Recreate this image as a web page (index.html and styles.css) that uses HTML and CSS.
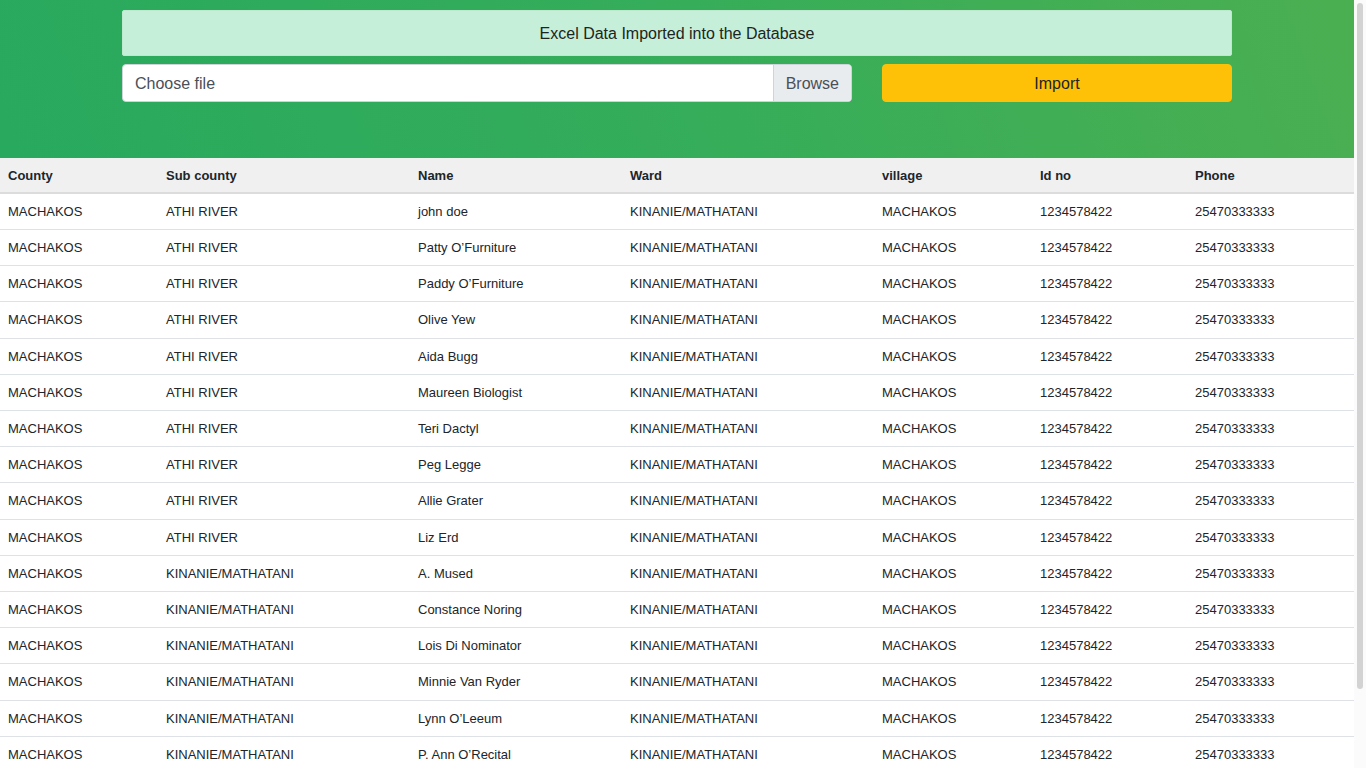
FILE: index.html
```html
<!DOCTYPE html>
<html lang="en">
<head>
<meta charset="utf-8">
<title>Excel Import</title>
<link rel="stylesheet" href="styles.css">
</head>
<body>
<div class="page">
<header class="hero">
  <div class="container">
    <div class="alert">Excel Data Imported into the Database</div>
    <form class="upload-row">
      <div class="file-col">
        <div class="file-input">
          <span class="file-label">Choose file</span>
          <span class="file-browse">Browse</span>
        </div>
      </div>
      <div class="btn-col">
        <button type="button" class="btn-import">Import</button>
      </div>
    </form>
  </div>
</header>
<table class="data-table">
  <colgroup>
    <col class="c1"><col class="c2"><col class="c3"><col class="c4"><col class="c5"><col class="c6"><col class="c7">
  </colgroup>
  <thead>
    <tr><th>County</th><th>Sub county</th><th>Name</th><th>Ward</th><th>village</th><th>Id no</th><th>Phone</th></tr>
  </thead>
  <tbody>
    <tr><td>MACHAKOS</td><td>ATHI RIVER</td><td>john doe</td><td>KINANIE/MATHATANI</td><td>MACHAKOS</td><td>1234578422</td><td>25470333333</td></tr>
    <tr><td>MACHAKOS</td><td>ATHI RIVER</td><td>Patty O’Furniture</td><td>KINANIE/MATHATANI</td><td>MACHAKOS</td><td>1234578422</td><td>25470333333</td></tr>
    <tr><td>MACHAKOS</td><td>ATHI RIVER</td><td>Paddy O’Furniture</td><td>KINANIE/MATHATANI</td><td>MACHAKOS</td><td>1234578422</td><td>25470333333</td></tr>
    <tr><td>MACHAKOS</td><td>ATHI RIVER</td><td>Olive Yew</td><td>KINANIE/MATHATANI</td><td>MACHAKOS</td><td>1234578422</td><td>25470333333</td></tr>
    <tr><td>MACHAKOS</td><td>ATHI RIVER</td><td>Aida Bugg</td><td>KINANIE/MATHATANI</td><td>MACHAKOS</td><td>1234578422</td><td>25470333333</td></tr>
    <tr><td>MACHAKOS</td><td>ATHI RIVER</td><td>Maureen Biologist</td><td>KINANIE/MATHATANI</td><td>MACHAKOS</td><td>1234578422</td><td>25470333333</td></tr>
    <tr><td>MACHAKOS</td><td>ATHI RIVER</td><td>Teri Dactyl</td><td>KINANIE/MATHATANI</td><td>MACHAKOS</td><td>1234578422</td><td>25470333333</td></tr>
    <tr><td>MACHAKOS</td><td>ATHI RIVER</td><td>Peg Legge</td><td>KINANIE/MATHATANI</td><td>MACHAKOS</td><td>1234578422</td><td>25470333333</td></tr>
    <tr><td>MACHAKOS</td><td>ATHI RIVER</td><td>Allie Grater</td><td>KINANIE/MATHATANI</td><td>MACHAKOS</td><td>1234578422</td><td>25470333333</td></tr>
    <tr><td>MACHAKOS</td><td>ATHI RIVER</td><td>Liz Erd</td><td>KINANIE/MATHATANI</td><td>MACHAKOS</td><td>1234578422</td><td>25470333333</td></tr>
    <tr><td>MACHAKOS</td><td>KINANIE/MATHATANI</td><td>A. Mused</td><td>KINANIE/MATHATANI</td><td>MACHAKOS</td><td>1234578422</td><td>25470333333</td></tr>
    <tr><td>MACHAKOS</td><td>KINANIE/MATHATANI</td><td>Constance Noring</td><td>KINANIE/MATHATANI</td><td>MACHAKOS</td><td>1234578422</td><td>25470333333</td></tr>
    <tr><td>MACHAKOS</td><td>KINANIE/MATHATANI</td><td>Lois Di Nominator</td><td>KINANIE/MATHATANI</td><td>MACHAKOS</td><td>1234578422</td><td>25470333333</td></tr>
    <tr><td>MACHAKOS</td><td>KINANIE/MATHATANI</td><td>Minnie Van Ryder</td><td>KINANIE/MATHATANI</td><td>MACHAKOS</td><td>1234578422</td><td>25470333333</td></tr>
    <tr><td>MACHAKOS</td><td>KINANIE/MATHATANI</td><td>Lynn O’Leeum</td><td>KINANIE/MATHATANI</td><td>MACHAKOS</td><td>1234578422</td><td>25470333333</td></tr>
    <tr><td>MACHAKOS</td><td>KINANIE/MATHATANI</td><td>P. Ann O’Recital</td><td>KINANIE/MATHATANI</td><td>MACHAKOS</td><td>1234578422</td><td>25470333333</td></tr>
    <tr><td>MACHAKOS</td><td>KINANIE/MATHATANI</td><td>Ray O’Sun</td><td>KINANIE/MATHATANI</td><td>MACHAKOS</td><td>1234578422</td><td>25470333333</td></tr>
    <tr><td>MACHAKOS</td><td>KINANIE/MATHATANI</td><td>Rita Book</td><td>KINANIE/MATHATANI</td><td>MACHAKOS</td><td>1234578422</td><td>25470333333</td></tr>
  </tbody>
</table>
</div>
<div class="scrollbar" aria-hidden="true"><div class="scroll-thumb"></div></div>
</body>
</html>
```
FILE: styles.css
```css
* { box-sizing: border-box; }
html, body { margin: 0; padding: 0; height: 100%; overflow: hidden; }
body {
  font-family: "Liberation Sans", Arial, sans-serif;
  color: #212529;
  background: #fff;
  display: flex;
}
.page {
  flex: 1;
  min-width: 0;
  height: 100vh;
  overflow: hidden;
}
.scrollbar {
  flex: 0 0 12px;
  height: 100vh;
  background: #fbfbfb;
  padding: 3px 3px 0 3px;
}
.scroll-thumb {
  width: 6px;
  height: 686px;
  background: #d3d3d3;
  border-radius: 3px;
}
.hero {
  background: linear-gradient(70deg, #28a95e 0%, #35ad5a 50%, #4baf51 100%);
  padding: 10px 0 56px;
}
.container {
  width: 1110px;
  margin: 0 auto;
}
.alert {
  background: #c6efda;
  border: 1px solid #bfe8d1;
  color: #1d2522;
  text-align: center;
  font-size: 16px;
  line-height: 24px;
  padding: 11px 20px 9px;
  border-radius: 2px;
}
.upload-row {
  display: flex;
  gap: 30px;
  margin: 8px 0 0;
}
.file-col { flex: 0 0 730px; }
.btn-col { flex: 0 0 350px; }
.file-input {
  display: flex;
  height: 38px;
  background: #fff;
  border: 1px solid #ced4da;
  border-radius: 4px;
  overflow: hidden;
  font-size: 16px;
  line-height: 37px;
  color: #495057;
}
.file-label {
  flex: 1;
  padding: 0 12px;
}
.file-browse {
  background: #e9ecef;
  border-left: 1px solid #ced4da;
  padding: 0 12px;
}
.btn-import {
  width: 100%;
  height: 38px;
  background: #ffc107;
  border: 1px solid #ffc107;
  border-radius: 4px;
  font-family: inherit;
  font-size: 16px;
  padding-top: 2px;
  color: #212529;
  cursor: pointer;
}
.data-table {
  width: 100%;
  border-collapse: collapse;
  font-size: 13px;
  table-layout: fixed;
}
.c1 { width: 158px; }
.c2 { width: 252px; }
.c3 { width: 212px; }
.c4 { width: 252px; }
.c5 { width: 158px; }
.c6 { width: 155px; }
.c7 { width: auto; }
.data-table th,
.data-table td {
  text-align: left;
  padding: 10px 8px;
  line-height: 15.2px;
  white-space: nowrap;
}
.data-table th {
  background: #f0f0f0;
  font-weight: bold;
  padding: 9.5px 8px 9px;
  border-bottom: 2px solid #dcdcdc;
}
.data-table td {
  border-bottom: 1px solid #dee2e6;
}
```
